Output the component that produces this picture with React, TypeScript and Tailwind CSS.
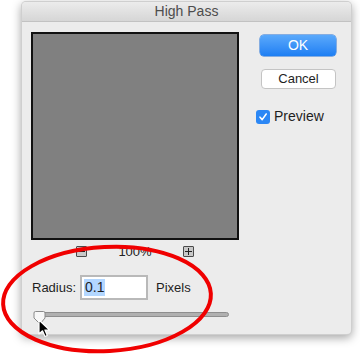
import React from 'react';

const font = { fontFamily: '"Liberation Sans", Arial, sans-serif' };

const ZoomBox = ({ plus }: { plus?: boolean }) => (
  <div className="relative w-[11px] h-[11px] border border-[#4a4a4a] bg-[#c8c8c8] rounded-[1px] flex items-center justify-center">
    <div className="absolute w-[7px] h-[1px] bg-[#222]" />
    {plus && <div className="absolute w-[1px] h-[7px] bg-[#222]" />}
  </div>
);

export default function App() {
  return (
    <div className="relative w-[360px] h-[360px] bg-white overflow-hidden text-[13px] text-[#1e1e1e]" style={font}>
      <div className="pl-[21px] pt-[1px]">
        <div className="w-[331px] h-[334px] bg-[#ececec] rounded-[5px] shadow-[0_3px_10px_rgba(0,0,0,0.35)] overflow-hidden border border-[#bdbdbd]/60">
          <div className="h-[20px] bg-gradient-to-b from-[#ececec] to-[#d6d6d6] border-b border-[#c2c2c2] flex items-center justify-center text-[14px] text-[#4d4d4d]">
            High Pass
          </div>

          <div className="flex">
            <div className="ml-[9px] mt-[10px] w-[208px]">
              <div className="w-[208px] h-[208px] border-2 border-[#111] bg-[#808080]" />

              <div className="mt-[6px] mx-auto w-[118px] h-[11px] flex items-center justify-between">
                <ZoomBox />
                <span className="text-[13px] leading-none text-[#222]">100%</span>
                <ZoomBox plus />
              </div>

              <div className="mt-[18px] flex items-center h-[25px]">
                <span className="ml-[1px] w-[48px]">Radius:</span>
                <div className="w-[68px] h-[25px] border-2 border-[#b9b9b9] bg-white flex items-center pl-[2px]">
                  <span className="bg-[#b3d7ff] px-[1px] leading-[17px] text-[14px]">0.1</span>
                </div>
                <span className="ml-[8px]">Pixels</span>
              </div>

              <div className="mt-[12px] ml-[9px] w-[189px] h-[5px] rounded-full bg-[#b0b0b0] border border-[#8e8e8e]" />
            </div>

            <div className="ml-[21px] mt-[13px] flex flex-col items-start">
              <div className="w-[76px] h-[21px] rounded-[4px] bg-gradient-to-b from-[#5aa9fb] to-[#1c7ef3] text-white text-[14px] flex items-center justify-center shadow-[0_0_0_0.5px_#1e6fd6]">
                OK
              </div>
              <div className="mt-[13px] ml-[1px] w-[75px] h-[20px] rounded-[4px] bg-white border border-[#c4c4c4] flex items-center justify-center">
                Cancel
              </div>
              <div className="mt-[17px] -ml-[4px] flex items-center gap-[4px]">
                <div className="w-[14px] h-[14px] rounded-[3px] bg-[#2b87f5] flex items-center justify-center">
                  <svg width="10" height="10" viewBox="0 0 10 10">
                    <path d="M2 5.2 L4.2 7.6 L8.2 2" fill="none" stroke="white" strokeWidth="1.6" strokeLinecap="round" strokeLinejoin="round" />
                  </svg>
                </div>
                <span className="text-[14px]">Preview</span>
              </div>
            </div>
          </div>
        </div>
      </div>

      <svg className="absolute left-[33px] top-[310px] pointer-events-none" width="14" height="16" viewBox="0 0 14 16">
        <path d="M2.5 1.5 H10.5 Q12 1.5 12 3 V8 L7 14 L1 8 V3 Q1 1.5 2.5 1.5 Z" fill="#f7f7f7" stroke="#8a8a8a" strokeWidth="1" />
      </svg>

      <svg className="absolute left-[38px] top-[319px] pointer-events-none" width="14" height="20" viewBox="0 0 14 20">
        <path d="M1 1 L1 15 L4.5 11.8 L7 17.5 L9.3 16.5 L6.9 11 L11.5 11 Z" fill="#000" stroke="#fff" strokeWidth="1.2" strokeLinejoin="round" />
      </svg>

      <svg className="absolute inset-0 pointer-events-none" width="360" height="360" viewBox="0 0 360 360">
        <ellipse cx="107" cy="299" rx="104" ry="52" fill="none" stroke="#f00000" strokeWidth="4" transform="rotate(-3 107 299)" />
      </svg>
    </div>
  );
}
